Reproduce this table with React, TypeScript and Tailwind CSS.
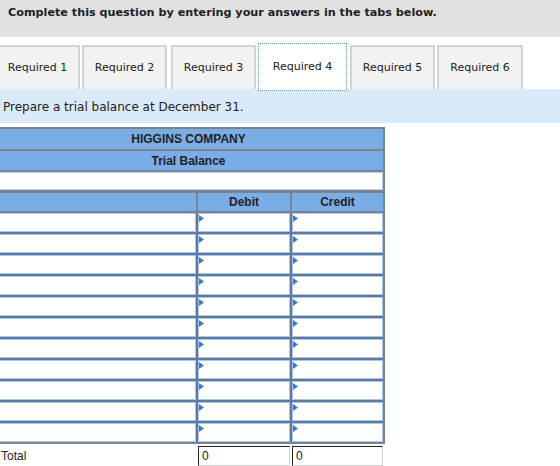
import React from "react";

const tabs = [
  { label: "Required 1", cls: "ml-[-5px] w-[85px]" },
  { label: "Required 2", cls: "ml-[2px] w-[85px]" },
  { label: "Required 3", cls: "ml-[4px] w-[85px]" },
];
const tabsAfter = [
  { label: "Required 5", cls: "ml-[3px] w-[85px]" },
  { label: "Required 6", cls: "ml-[2px] w-[86px]" },
];

function Flag() {
  return (
    <svg className="absolute left-0 top-[1px]" width="5" height="7" viewBox="0 0 5 7">
      <polygon points="0,0 5,3.5 0,7" fill="#3a7bc8" />
    </svg>
  );
}

function Tab({ label, cls }: { label: string; cls: string }) {
  return (
    <div
      className={`${cls} mt-[2px] h-[44px] shrink-0 flex items-center justify-center bg-[#f2f2f2] border-2 border-b-0 border-[#d3d3d3] text-[11px] text-[#222]`}
      style={{ fontFamily: '"DejaVu Sans", Verdana, sans-serif' }}
    >
      {label}
    </div>
  );
}

export default function App() {
  const rows = Array.from({ length: 11 });
  return (
    <div className="w-[560px] h-[466px] overflow-hidden bg-white">
      <div
        className="h-[37px] bg-[#e1e1e1] pl-[8px] pt-[5px] font-bold text-[11.2px] text-[#222]"
        style={{ fontFamily: '"DejaVu Sans", Verdana, sans-serif' }}
      >
        Complete this question by entering your answers in the tabs below.
      </div>
      <div className="h-[6px]" />
      <div className="flex items-start h-[46px]">
        {tabs.map((t) => (
          <Tab key={t.label} {...t} />
        ))}
        <div
          className="relative z-10 ml-[2px] w-[89px] h-[48px] shrink-0 flex items-center justify-center bg-white border border-dotted border-[#5b8fd3] text-[11px] text-[#222]"
          style={{ fontFamily: '"DejaVu Sans", Verdana, sans-serif' }}
        >
          Required 4
        </div>
        {tabsAfter.map((t) => (
          <Tab key={t.label} {...t} />
        ))}
      </div>
      <div
        className="h-[34px] bg-[#dbeaf8] pl-[3px] pt-[2px] flex items-center text-[12px] text-[#222]"
        style={{ fontFamily: '"DejaVu Sans", Verdana, sans-serif' }}
      >
        Prepare a trial balance at December 31.
      </div>
      <div className="h-[4px]" />
      <div
        className="ml-[-8px] w-[393px] text-[12px] text-[#222]"
        style={{ fontFamily: '"Liberation Sans", Arial, sans-serif' }}
      >
        <div className="bg-[#7a848f] p-[2px] flex flex-col">
          <div className="h-[20px] bg-[#7aade6] flex items-center justify-center font-bold">
            HIGGINS COMPANY
          </div>
          <div className="h-[19px] mt-[2px] bg-[#7aade6] flex items-center justify-center font-bold">
            Trial Balance
          </div>
          <div className="h-[18px] mt-[2px] bg-white border border-[#b9d1ee]" />
          <div className="mt-[3px] grid grid-cols-[202px_92px_91px] gap-x-[2px]">
            <div className="h-[18px] bg-[#7aade6]" />
            <div className="h-[18px] bg-[#7aade6] flex items-center justify-center font-bold">
              Debit
            </div>
            <div className="h-[18px] bg-[#7aade6] flex items-center justify-center font-bold">
              Credit
            </div>
          </div>
          <div className="mt-[2px] grid grid-cols-[202px_92px_91px] gap-x-[2px] gap-y-[2px] bg-[#5f7a9c]">
            {rows.map((_, i) => (
              <React.Fragment key={i}>
                <div className="h-[19px] bg-white border border-[#a9c7ec]" />
                <div className="relative h-[19px] bg-white border border-[#a9c7ec]">
                  <Flag />
                </div>
                <div className="relative h-[19px] bg-white border border-[#a9c7ec]">
                  <Flag />
                </div>
              </React.Fragment>
            ))}
          </div>
        </div>
        <div className="mt-[2px] px-[2px] grid grid-cols-[202px_92px_91px] gap-x-[2px]">
          <div className="h-[20px] flex items-center pl-[7px]">Total</div>
          <div className="h-[20px] flex items-center pl-[3px] border-t border-l border-t-[#222] border-l-[#222] border-r border-b border-r-[#d0d0d0] border-b-[#d0d0d0]">
            0
          </div>
          <div className="h-[20px] flex items-center pl-[3px] border-t border-l border-t-[#222] border-l-[#222] border-r border-b border-r-[#d0d0d0] border-b-[#d0d0d0]">
            0
          </div>
        </div>
      </div>
    </div>
  );
}
